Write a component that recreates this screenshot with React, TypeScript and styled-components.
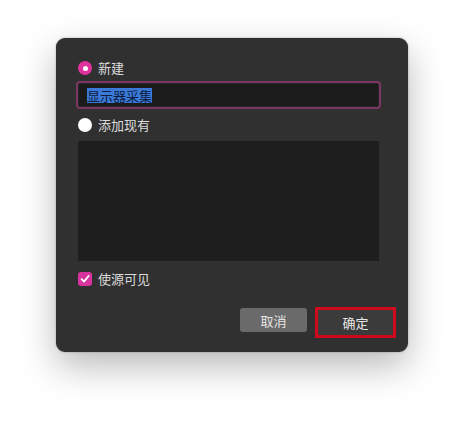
import styled, { createGlobalStyle } from "styled-components";

const GlobalStyle = createGlobalStyle`
  html, body {
    margin: 0;
    padding: 0;
    background: #ffffff;
  }
  body {
    font-family: "Noto Sans CJK SC", "Noto Sans", sans-serif;
  }
`;

export default function App() {
  return (
    <>
      <GlobalStyle />
      <Page>
        <Dialog>
          <OptionRow>
            <Radio $checked />
            <Label>新建</Label>
          </OptionRow>
          <NameInput>
            <Selected>显示器采集</Selected>
          </NameInput>
          <OptionRow>
            <Radio />
            <Label>添加现有</Label>
          </OptionRow>
          <SourceList />
          <OptionRow>
            <Checkbox>
              <svg width="10" height="10" viewBox="0 0 10 10">
                <path
                  d="M1.6 5.2 L4 7.6 L8.6 2"
                  fill="none"
                  stroke="#fff"
                  strokeWidth="1.8"
                  strokeLinecap="round"
                  strokeLinejoin="round"
                />
              </svg>
            </Checkbox>
            <Label>使源可见</Label>
          </OptionRow>
          <Footer>
            <CancelButton>取消</CancelButton>
            <OkButton>确定</OkButton>
          </Footer>
        </Dialog>
      </Page>
    </>
  );
}

const Page = styled.div`
  width: 464px;
  height: 426px;
  box-sizing: border-box;
  padding: 38px 0 0 56px;
`;

const Dialog = styled.div`
  width: 352px;
  height: 314px;
  box-sizing: border-box;
  padding: 20px 29px 14px 22px;
  background: #303030;
  border-radius: 9px;
  box-shadow: 0 14px 36px rgba(0, 0, 0, 0.28), 0 0 2px rgba(0, 0, 0, 0.35);
  display: flex;
  flex-direction: column;
`;

const OptionRow = styled.div`
  height: 20px;
  display: flex;
  align-items: center;
  gap: 6px;
`;

const Radio = styled.span<{ $checked?: boolean }>`
  width: 14px;
  height: 14px;
  border-radius: 50%;
  box-sizing: border-box;
  flex-shrink: 0;
  background: ${(p) => (p.$checked ? "#e0329e" : "#ffffff")};
  position: relative;

  &::after {
    content: "";
    display: ${(p) => (p.$checked ? "block" : "none")};
    position: absolute;
    left: 4.5px;
    top: 4.5px;
    width: 5px;
    height: 5px;
    border-radius: 50%;
    background: #ffffff;
  }
`;

const Label = styled.span`
  color: #dcdcdc;
  font-size: 13px;
  line-height: 20px;
`;

const NameInput = styled.div`
  margin: 5px 0 8px;
  height: 24px;
  box-sizing: border-box;
  background: #1b1b1b;
  border: 1px solid #262626;
  border-radius: 2px;
  box-shadow: 0 0 0 2px #7a3560;
  padding-left: 8px;
  display: flex;
  align-items: center;
`;

const Selected = styled.span`
  background: #3a79d8;
  color: #0e1c3e;
  font-size: 13px;
  line-height: 15px;
`;

const SourceList = styled.div`
  margin: 6px 0 8px;
  height: 120px;
  background: #1e1e1e;
`;

const Checkbox = styled.span`
  width: 14px;
  height: 14px;
  border-radius: 3px;
  background: #d8349f;
  display: flex;
  align-items: center;
  justify-content: center;
  flex-shrink: 0;
`;

const Footer = styled.div`
  margin-top: 18px;
  display: flex;
  justify-content: flex-end;
  align-items: flex-start;
  gap: 8px;
  margin-right: -17px;
`;

const CancelButton = styled.div`
  margin-top: 1px;
  width: 67px;
  height: 24px;
  border-radius: 3px;
  background: #6a6a6a;
  color: #e4e4e4;
  font-size: 13px;
  display: flex;
  align-items: center;
  justify-content: center;
`;

const OkButton = styled.div`
  width: 81px;
  height: 31px;
  box-sizing: border-box;
  border: 3px solid #d0081e;
  background: #3b3b3b;
  color: #e8e8e8;
  font-size: 13px;
  display: flex;
  align-items: center;
  justify-content: center;
`;
